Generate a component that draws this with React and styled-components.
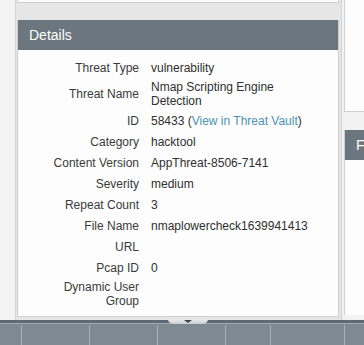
import React from 'react';
import styled, { createGlobalStyle } from 'styled-components';

const GlobalStyle = createGlobalStyle`
  html, body {
    margin: 0;
    padding: 0;
    background: #f3f3f3;
    font-family: "Liberation Sans", Arial, sans-serif;
  }
`;

const details = [
  { label: 'Threat Type', value: 'vulnerability' },
  { label: 'Threat Name', value: 'Nmap Scripting Engine Detection', tall: true },
  { label: 'ID', value: '58433', link: 'View in Threat Vault' },
  { label: 'Category', value: 'hacktool' },
  { label: 'Content Version', value: 'AppThreat-8506-7141' },
  { label: 'Severity', value: 'medium' },
  { label: 'Repeat Count', value: '3' },
  { label: 'File Name', value: 'nmaplowercheck1639941413' },
  { label: 'URL', value: '' },
  { label: 'Pcap ID', value: '0' },
  { label: ['Dynamic User', 'Group'], value: '', tall: true },
];

const bottomCells = [22, 68, 68, 68, 45, 74];

const App = () => {
  return (
    <Page>
      <GlobalStyle />
      <Main>
        <Column>
          <StubCard />
          <Panel>
            <PanelHeader>Details</PanelHeader>
            <DetailsBody>
              {details.map((row, i) => (
                <React.Fragment key={i}>
                  <Label $tall={row.tall}>
                    {Array.isArray(row.label) ? <span>{row.label[0]}<br />{row.label[1]}</span> : row.label}
                  </Label>
                  <Value $tall={row.tall}>
                    {row.value}
                    {row.link && <> (<Link href="#">{row.link}</Link>)</>}
                  </Value>
                </React.Fragment>
              ))}
            </DetailsBody>
          </Panel>
        </Column>
        <SideColumn>
          <SideCard />
          <SidePanel>
            <PanelHeader>F</PanelHeader>
            <SideBody />
          </SidePanel>
        </SideColumn>
      </Main>
      <BottomBar>
        {bottomCells.map((w, i) => (
          <BarCell key={i} $width={w} />
        ))}
        <BarCell $grow />
        <Handle><Arrow /></Handle>
      </BottomBar>
    </Page>
  );
};

export default App;

const Page = styled.div`
  position: relative;
  height: 345px;
  overflow: hidden;
  display: flex;
  flex-direction: column;
`;

const Main = styled.div`
  height: 320px;
  display: flex;
  padding-left: 15px;
`;

const Column = styled.div`
  width: 322px;
  flex-shrink: 0;
  background: #e6e6e6;
  border-left: 1px solid #d6d6d6;
  border-right: 1px solid #d3d3d3;
  padding: 0 2px 0 1px;
  display: flex;
  flex-direction: column;
  gap: 17px;
`;

const StubCard = styled.div`
  height: 2px;
  background: #fdfdfd;
  border: 1px solid #cfcfcf;
  border-top: none;
`;

const Panel = styled.div`
  background: #fdfdfd;
  border: 1px solid #cfcfcf;
  border-top: none;
`;

const PanelHeader = styled.div`
  height: 30px;
  background: #6b767e;
  color: #ffffff;
  font-size: 14px;
  line-height: 30px;
  padding-left: 11px;
`;

const DetailsBody = styled.div`
  display: grid;
  grid-template-columns: 121px 170px;
  column-gap: 12px;
  padding: 7px 0 6px 0;
  font-size: 12px;
  color: #2f2f2f;
`;

const Label = styled.div`
  padding: ${p => (p.$tall ? '2px 0' : '4.5px 0')};
  line-height: ${p => (p.$tall ? '14px' : '12px')};
  display: flex;
  align-items: center;
  justify-content: flex-end;
  text-align: right;
  color: #3a3a3a;
`;

const Value = styled.div`
  padding: ${p => (p.$tall ? '2px 0' : '4.5px 0')};
  line-height: ${p => (p.$tall ? '14px' : '12px')};
  min-height: 12px;
  align-self: center;
`;

const Link = styled.a`
  color: #4d93b1;
  text-decoration: none;
`;

const SideColumn = styled.div`
  flex: 1;
  background: #f2f2f2;
  padding-left: 2px;
  display: flex;
  flex-direction: column;
  gap: 18px;
`;

const SideCard = styled.div`
  height: 111px;
  background: #fdfdfd;
  border-left: 1px solid #cfcfcf;
  border-bottom: 1px solid #cfcfcf;
`;

const SidePanel = styled.div`
  flex: 1;
  display: flex;
  flex-direction: column;
  border-left: 1px solid #cfcfcf;
  margin-bottom: 5px;
`;

const SideBody = styled.div`
  flex: 1;
  background: #fdfdfd;
`;

const BottomBar = styled.div`
  flex: 1;
  display: flex;
  background: #7e8992;
  border-top: 3px solid #5f6a72;
  box-shadow: inset 0 1px 0 #a3abb1;
`;

const BarCell = styled.div`
  width: ${p => (p.$width ? `${p.$width - 1}px` : 'auto')};
  flex: ${p => (p.$grow ? 1 : 'none')};
  border-right: ${p => (p.$grow ? 'none' : '1px solid #a8b0b6')};
  margin-top: 2px;
`;

const Handle = styled.div`
  position: absolute;
  left: 168px;
  top: 319px;
  width: 40px;
  height: 5px;
  border-radius: 0 0 6px 6px;
  background: linear-gradient(#eceeef, #c9ced2);
  display: flex;
  justify-content: center;
`;

const Arrow = styled.div`
  width: 0;
  height: 0;
  border-left: 4px solid transparent;
  border-right: 4px solid transparent;
  border-top: 3px solid #3c444a;
  margin-top: 1px;
`;
